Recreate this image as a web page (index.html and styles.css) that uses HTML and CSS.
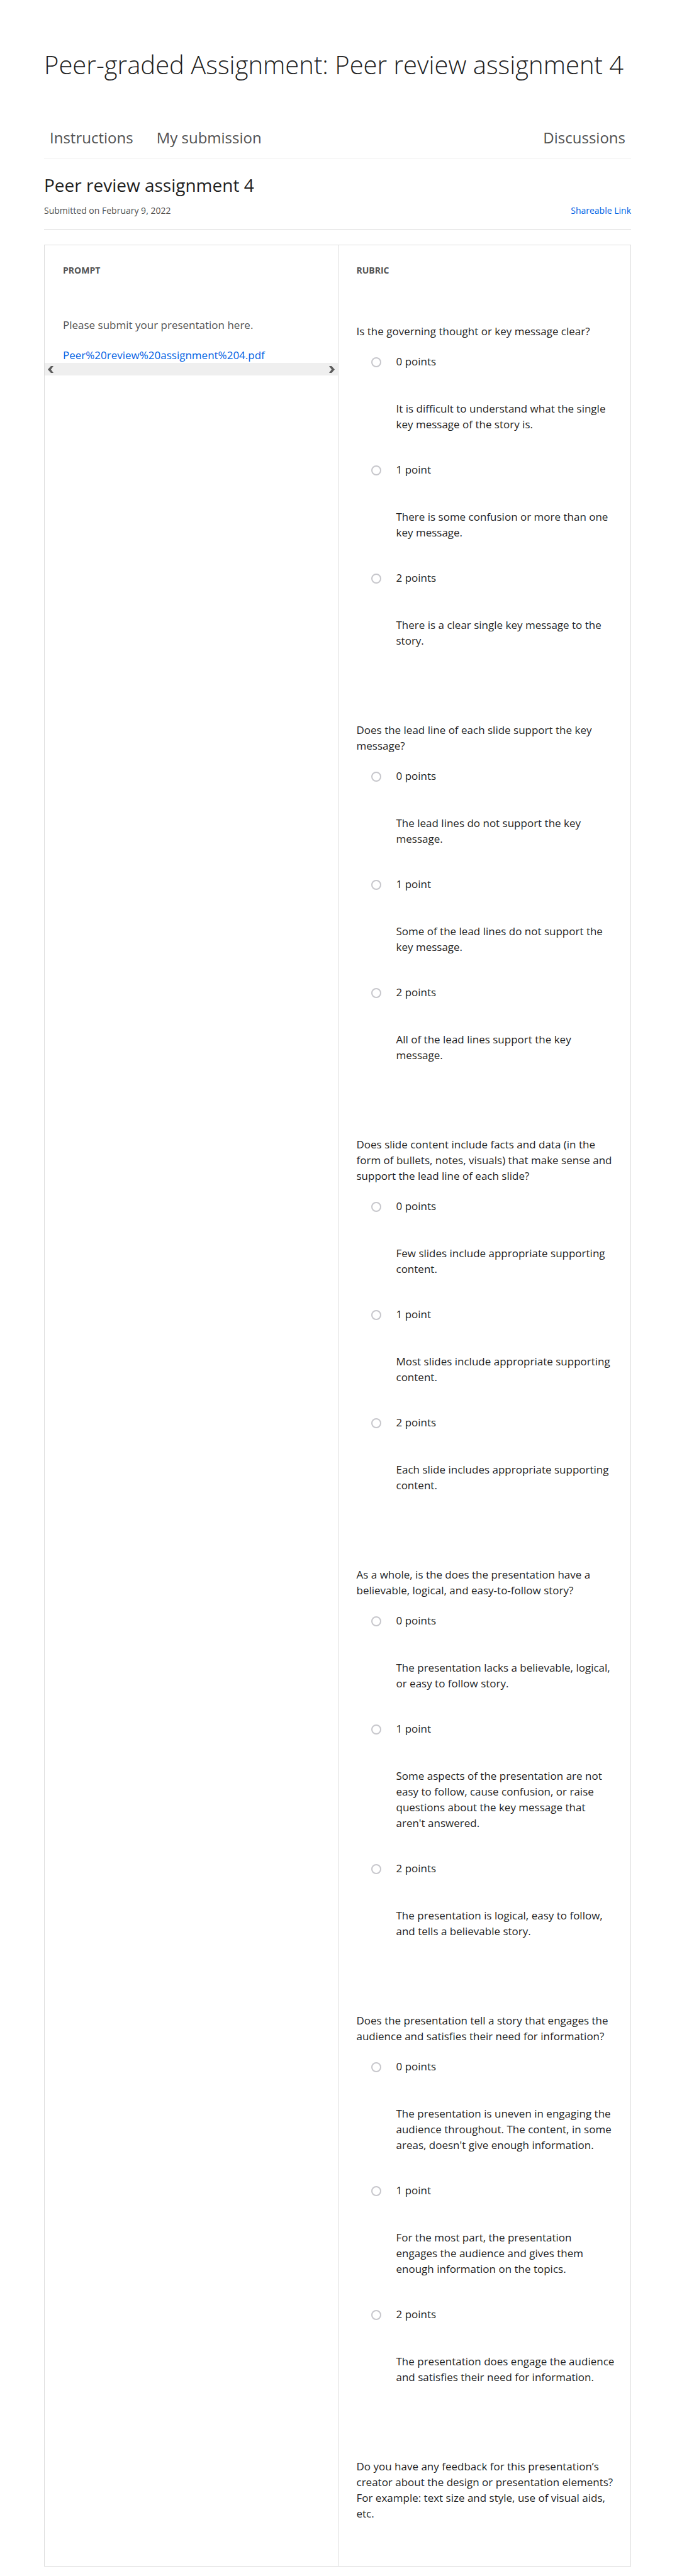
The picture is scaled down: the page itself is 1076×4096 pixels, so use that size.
FILE: index.html
```
<!DOCTYPE html>
<html lang="en">
<head>
<meta charset="utf-8">
<meta name="viewport" content="width=device-width, initial-scale=1">
<title>Peer-graded Assignment: Peer review assignment 4</title>
<link rel="stylesheet" href="styles.css">
</head>
<body>
<main class="page">
  <h1 class="page-title">Peer-graded Assignment: Peer review assignment 4</h1>
  <nav class="tabs">
    <a class="tab" href="#instructions">Instructions</a>
    <a class="tab" href="#submission">My submission</a>
    <a class="tab tab-end" href="#discussions">Discussions</a>
  </nav>
  <header class="submission-head">
    <h2 class="submission-title">Peer review assignment 4</h2>
    <div class="submission-meta">
      <span>Submitted on February 9, 2022</span>
      <a class="link" href="#share">Shareable Link</a>
    </div>
  </header>
  <div class="review">
    <section class="prompt">
      <h3 class="column-title">PROMPT</h3>
      <p class="prompt-text">Please submit your presentation here.</p>
      <a class="link prompt-file" href="#file">Peer%20review%20assignment%204.pdf</a>
      <div class="scrollbar">
        <button class="scroll-button" type="button" aria-label="Scroll left"><svg viewBox="0 0 9 11" width="9" height="11"><path d="M5 0h4L5 5.500 9 11H5L0 5.500z" /></svg></button>
        <button class="scroll-button" type="button" aria-label="Scroll right"><svg viewBox="0 0 9 11" width="9" height="11"><path d="M4 0H0l4 5.500L0 11h4l5-5.500z" /></svg></button>
      </div>
    </section>
    <section class="rubric">
      <h3 class="column-title">RUBRIC</h3>
      <fieldset class="question">
        <legend class="question-text">Is the governing thought or key message clear?</legend>
        <label class="option"><input class="radio" type="radio" name="q1"><span class="points">0 points</span><span class="description">It is difficult to understand what the single key message of the story is.</span></label>
        <label class="option"><input class="radio" type="radio" name="q1"><span class="points">1 point</span><span class="description">There is some confusion or more than one key message.</span></label>
        <label class="option"><input class="radio" type="radio" name="q1"><span class="points">2 points</span><span class="description">There is a clear single key message to the story.</span></label>
      </fieldset>
      <fieldset class="question">
        <legend class="question-text">Does the lead line of each slide support the key message?</legend>
        <label class="option"><input class="radio" type="radio" name="q2"><span class="points">0 points</span><span class="description">The lead lines do not support the key message.</span></label>
        <label class="option"><input class="radio" type="radio" name="q2"><span class="points">1 point</span><span class="description">Some of the lead lines do not support the key message.</span></label>
        <label class="option"><input class="radio" type="radio" name="q2"><span class="points">2 points</span><span class="description">All of the lead lines support the key message.</span></label>
      </fieldset>
      <fieldset class="question">
        <legend class="question-text">Does slide content include facts and data (in the form of bullets, notes, visuals) that make sense and support the lead line of each slide?</legend>
        <label class="option"><input class="radio" type="radio" name="q3"><span class="points">0 points</span><span class="description">Few slides include appropriate supporting content.</span></label>
        <label class="option"><input class="radio" type="radio" name="q3"><span class="points">1 point</span><span class="description">Most slides include appropriate supporting content.</span></label>
        <label class="option"><input class="radio" type="radio" name="q3"><span class="points">2 points</span><span class="description">Each slide includes appropriate supporting content.</span></label>
      </fieldset>
      <fieldset class="question">
        <legend class="question-text">As a whole, is the does the presentation have a believable, logical, and easy-to-follow story?</legend>
        <label class="option"><input class="radio" type="radio" name="q4"><span class="points">0 points</span><span class="description">The presentation lacks a believable, logical, or easy to follow story.</span></label>
        <label class="option"><input class="radio" type="radio" name="q4"><span class="points">1 point</span><span class="description">Some aspects of the presentation are not easy to follow, cause confusion, or raise questions about the key message that aren't answered.</span></label>
        <label class="option"><input class="radio" type="radio" name="q4"><span class="points">2 points</span><span class="description">The presentation is logical, easy to follow, and tells a believable story.</span></label>
      </fieldset>
      <fieldset class="question">
        <legend class="question-text">Does the presentation tell a story that engages the audience and satisfies their need for information?</legend>
        <label class="option"><input class="radio" type="radio" name="q5"><span class="points">0 points</span><span class="description">The presentation is uneven in engaging the audience throughout. The content, in some areas, doesn't give enough information.</span></label>
        <label class="option"><input class="radio" type="radio" name="q5"><span class="points">1 point</span><span class="description">For the most part, the presentation engages the audience and gives them enough information on the topics.</span></label>
        <label class="option"><input class="radio" type="radio" name="q5"><span class="points">2 points</span><span class="description">The presentation does engage the audience and satisfies their need for information.</span></label>
      </fieldset>
      <p class="question-text">Do you have any feedback for this presentation’s creator about the design or presentation elements? For example: text size and style, use of visual aids, etc.</p>
    </section>
  </div>
</main>
</body>
</html>
```
FILE: styles.css
```
* { box-sizing: border-box; }

body {
  margin: 0;
  background: #fff;
  color: #1f1f1f;
  font: 17px/25px "Open Sans", "Noto Sans", sans-serif;
}

h1, h2, h3, p { margin: 0; font-weight: 400; }

.page { padding: 74px 73px 15px 70px; }

.page-title {
  font-size: 40px;
  font-weight: 300;
  line-height: 58px;
}

.tabs {
  display: flex;
  gap: 37px;
  padding: 71px 9px 16px;
  border-bottom: 1px solid #efefef;
}

.tab {
  color: #525252;
  font-size: 24px;
  line-height: 32px;
  text-decoration: none;
}

.tab-end { margin-left: auto; }

.submission-head {
  padding: 23px 0 17px;
  border-bottom: 1px solid #dcdcdc;
}

.submission-title { font-size: 28px; line-height: 38px; }

.submission-meta {
  display: flex;
  justify-content: space-between;
  padding-top: 10px;
  color: #525252;
  font-size: 14px;
  line-height: 24px;
}

.link { color: #0062e4; text-decoration: none; }

.review {
  display: grid;
  grid-template-columns: 1fr 1fr;
  margin-top: 24px;
  border: 1px solid #dcdcdc;
}

.prompt, .rubric { padding-top: 28px; }

.prompt { color: #525252; }

.rubric {
  padding-right: 25px;
  padding-bottom: 71px;
  padding-left: 29px;
  border-left: 1px solid #dcdcdc;
}

.column-title {
  color: #525252;
  font-size: 14px;
  font-weight: 700;
  line-height: 24px;
}

.prompt .column-title, .prompt-text, .prompt-file {
  display: block;
  margin-left: 29px;
}

.prompt-text { margin-top: 62px; }

.prompt-file { margin-top: 23px; }

.scrollbar {
  display: flex;
  justify-content: space-between;
  height: 20px;
  padding: 0 5px;
  background: #efefef;
}

.scroll-button {
  display: flex;
  align-items: center;
  padding: 0;
  border: 0;
  background: none;
}

.scroll-button path { fill: #5c5c5c; }

.question {
  min-width: 0;
  margin: 0 0 117px;
  padding: 0;
  border: 0;
}

.question-text { padding: 0; }

.column-title + .question { margin-top: 72px; }

.option {
  display: grid;
  grid-template-columns: 40px 1fr;
  row-gap: 50px;
  margin-top: 47px;
  padding-left: 23px;
}

.question-text + .option { margin-top: 23px; }

.radio {
  appearance: none;
  width: 16px;
  height: 16px;
  margin: 6px 0 0;
  border: 2px solid #c7c7cc;
  border-radius: 50%;
}

.description { grid-column: 2; }
```
